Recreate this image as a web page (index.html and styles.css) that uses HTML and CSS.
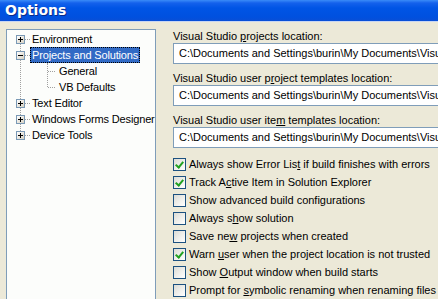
FILE: index.html
```html
<!DOCTYPE html>
<html lang="en">
<head>
    <meta charset="UTF-8">
    <meta name="viewport" content="width=device-width, initial-scale=1.0">
    <title>Options</title>
    <link rel="stylesheet" href="styles.css">
</head>
<body>
    <div class="titlebar">Options</div>
    <div class="dialog">
        <div class="tree">
            <ul class="roots">
                <li class="node">
                    <div class="row"><span class="expander plus"></span><span class="label">Environment</span></div>
                </li>
                <li class="node">
                    <div class="row"><span class="expander minus"></span><span class="label selected">Projects and Solutions</span></div>
                    <ul class="children">
                        <li class="row child"><span class="label">General</span></li>
                        <li class="row child last"><span class="label">VB Defaults</span></li>
                    </ul>
                </li>
                <li class="node">
                    <div class="row"><span class="expander plus"></span><span class="label">Text Editor</span></div>
                </li>
                <li class="node">
                    <div class="row"><span class="expander plus"></span><span class="label">Windows Forms Designer</span></div>
                </li>
                <li class="node">
                    <div class="row"><span class="expander plus"></span><span class="label">Device Tools</span></div>
                </li>
            </ul>
        </div>
        <div class="settings">
            <div class="field">
                <label>Visual Studio <u>p</u>rojects location:</label>
                <div class="textbox">C:\Documents and Settings\burin\My Documents\Visual Studio 2005\Projects</div>
            </div>
            <div class="field">
                <label>Visual Studio user p<u>r</u>oject templates location:</label>
                <div class="textbox">C:\Documents and Settings\burin\My Documents\Visual Studio 2005\Templates\ProjectTemplates</div>
            </div>
            <div class="field">
                <label>Visual Studio user ite<u>m</u> templates location:</label>
                <div class="textbox">C:\Documents and Settings\burin\My Documents\Visual Studio 2005\Templates\ItemTemplates</div>
            </div>
            <ul class="options">
                <li><span class="check on"></span><span>Always show Error Lis<u>t</u> if build finishes with errors</span></li>
                <li><span class="check on"></span><span>Track A<u>c</u>tive Item in Solution Explorer</span></li>
                <li><span class="check"></span><span>Show advanced build configurations</span></li>
                <li><span class="check"></span><span>Always s<u>h</u>ow solution</span></li>
                <li><span class="check"></span><span>Save ne<u>w</u> projects when created</span></li>
                <li><span class="check on"></span><span>Warn <u>u</u>ser when the project location is not trusted</span></li>
                <li><span class="check"></span><span>Show <u>O</u>utput window when build starts</span></li>
                <li><span class="check"></span><span>Prompt for <u>s</u>ymbolic renaming when renaming files</span></li>
            </ul>
        </div>
    </div>
</body>
</html>
```

FILE: styles.css
```css
body {
    margin: 0;
    width: 438px;
    height: 299px;
    overflow: hidden;
    background-color: #ece9d8;
    font-family: "Liberation Sans", Arial, sans-serif;
    font-size: 11px;
    color: #000;
}
.titlebar {
    height: 21px;
    line-height: 20px;
    padding-left: 5px;
    color: #fff;
    font-family: "DejaVu Sans", sans-serif;
    font-weight: bold;
    font-size: 14px;
    background: linear-gradient(#3a8cf8 0, #1461ec 3px, #0055e5 8px, #0050df 17px, #0a4fd6 21px);
    text-shadow: 1px 1px #0a2a8a;
    border-bottom: 1px solid #c8d6f3;
}
.dialog {
    display: flex;
    padding-top: 7px;
}
.tree {
    margin-left: 6px;
    width: 148px;
    height: 300px;
    border: 1px solid #7f9db9;
    background-color: #fcfdfb;
    padding-top: 1px;
    flex-shrink: 0;
    white-space: nowrap;
    letter-spacing: -0.15px;
}
ul {
    list-style: none;
    margin: 0;
    padding: 0;
}
.roots {
    position: relative;
    padding-left: 9px;
}
.roots::before {
    content: "";
    position: absolute;
    left: 13px;
    top: 8px;
    height: 96px;
    border-left: 1px dotted #a0a0a0;
}
.row {
    height: 16px;
    display: flex;
    align-items: center;
    position: relative;
}
.expander {
    width: 7px;
    height: 7px;
    border: 1px solid #7a99b5;
    background: linear-gradient(135deg, #ffffff, #d6d0c0);
    position: relative;
    z-index: 1;
    margin-right: 5px;
    flex-shrink: 0;
}
.expander::after {
    content: "";
    position: absolute;
    left: 1px;
    top: 3px;
    width: 5px;
    height: 1px;
    background-color: #000;
}
.plus::before {
    content: "";
    position: absolute;
    left: 3px;
    top: 1px;
    width: 1px;
    height: 5px;
    background-color: #000;
}
.node > .row::before {
    content: "";
    position: absolute;
    left: 9px;
    top: 8px;
    width: 5px;
    border-top: 1px dotted #a0a0a0;
}
.label {
    padding: 0 1px;
    line-height: 14px;
    border: 1px dotted transparent;
}
.selected {
    background-color: #316ac5;
    color: #fff;
    border-color: #f0c040;
    outline: 1px dotted #000;
    outline-offset: -1px;
}
.children {
    position: relative;
    padding-left: 31px;
}
.children::before {
    content: "";
    position: absolute;
    left: 31px;
    top: 0;
    height: 24px;
    border-left: 1px dotted #a0a0a0;
}
.child {
    padding-left: 10px;
}
.child::before {
    content: "";
    position: absolute;
    left: 1px;
    top: 8px;
    width: 7px;
    border-top: 1px dotted #a0a0a0;
}
.settings {
    margin-left: 17px;
    flex: 1;
    min-width: 0;
}
.field {
    display: flex;
    flex-direction: column;
    margin-bottom: 7px;
}
.field label {
    line-height: 14px;
    white-space: nowrap;
}
.textbox {
    width: 300px;
    height: 19px;
    line-height: 19px;
    border: 1px solid #7f9db9;
    background-color: #fff;
    padding-left: 5px;
    white-space: nowrap;
    overflow: hidden;
}
.options li {
    height: 18px;
    display: flex;
    align-items: center;
    white-space: nowrap;
}
.check {
    width: 11px;
    height: 11px;
    border: 1px solid #1c5180;
    background: linear-gradient(135deg, #dcdcd5, #ffffff);
    margin-right: 3px;
    position: relative;
    flex-shrink: 0;
}
.check.on::after {
    content: "";
    position: absolute;
    left: 3px;
    top: 1px;
    width: 3px;
    height: 6px;
    border-right: 2px solid #21a121;
    border-bottom: 2px solid #21a121;
    transform: rotate(40deg);
}
```
